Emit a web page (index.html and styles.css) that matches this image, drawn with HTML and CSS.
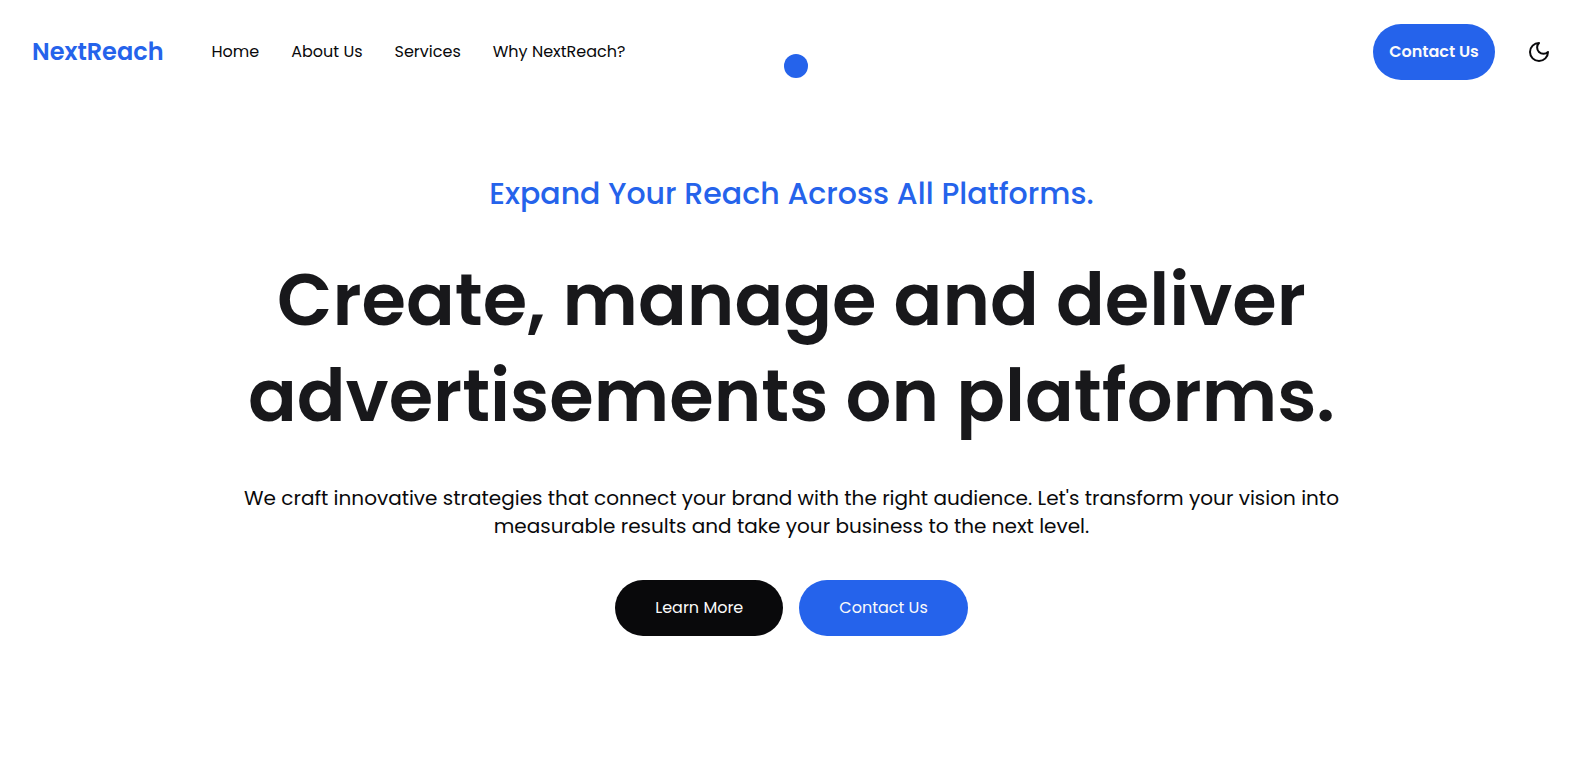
FILE: index.html
```html
<!DOCTYPE html>
<html lang="en">
<head>
<meta charset="utf-8">
<meta name="viewport" content="width=device-width, initial-scale=1">
<title>NextReach</title>
<link rel="stylesheet" href="styles.css">
</head>
<body>
<header class="header">
  <a class="brand" href="#">NextReach</a>
  <nav class="nav" aria-label="Main">
    <a href="#home">Home</a>
    <a href="#about">About Us</a>
    <a href="#services">Services</a>
    <a href="#why">Why NextReach?</a>
  </nav>
  <div class="actions">
    <button class="btn btn-nav" type="button">Contact Us</button>
    <button class="theme-toggle" type="button" aria-label="Toggle dark mode">
      <svg viewBox="0 0 24 24" width="24" height="24" fill="none" stroke="currentColor" stroke-width="2" stroke-linecap="round" stroke-linejoin="round" aria-hidden="true"><path d="M12 3a6 6 0 0 0 9 9 9 9 0 1 1-9-9Z"/></svg>
    </button>
  </div>
</header>
<main class="hero">
  <p class="eyebrow">Expand Your Reach Across All Platforms.</p>
  <h1 class="title">Create, manage and deliver <br>advertisements on platforms.</h1>
  <p class="lead">We craft innovative strategies that connect your brand with the right audience. Let's transform your vision into <br>measurable results and take your business to the next level.</p>
  <div class="cta">
    <button class="btn btn-dark" type="button">Learn More</button>
    <button class="btn" type="button">Contact Us</button>
  </div>
</main>
<span class="cursor-dot" aria-hidden="true"></span>
</body>
</html>
```
FILE: styles.css
```css
* { box-sizing: border-box; }

body {
  margin: 0;
  background: #fff;
  color: #09090b;
  font-family: Poppins, Inter, "Open Sans", sans-serif;
  font-size: 16px;
  line-height: 24px;
}

.header {
  display: flex;
  align-items: center;
  padding: 24px 27px 24px 32px;
}

.brand {
  color: #2563eb;
  font-size: 24px;
  font-weight: 600;
  line-height: 32px;
  text-decoration: none;
}

.nav {
  display: flex;
  gap: 32px;
  margin-left: 48px;
}

.nav a {
  color: inherit;
  text-decoration: none;
}

.actions {
  display: flex;
  align-items: center;
  gap: 32px;
  margin-left: auto;
}

.btn {
  min-width: 168px;
  height: 56px;
  padding: 0 40px;
  border: 0;
  border-radius: 28px;
  background: #2563eb;
  color: #fafafa;
  font: inherit;
  white-space: nowrap;
}

.btn-dark { background: #09090b; }

.btn-nav {
  min-width: 122px;
  padding: 0 16px;
  font-weight: 600;
}

.theme-toggle {
  display: flex;
  padding: 0;
  border: 0;
  background: none;
  color: inherit;
}

.hero {
  display: flex;
  flex-direction: column;
  align-items: center;
  padding: 72px 16px 64px 21px;
  text-align: center;
}

.eyebrow {
  margin: 0;
  color: #2563eb;
  font-size: 30px;
  font-weight: 500;
  line-height: 36px;
}

.title {
  margin: 40px 0 0;
  color: #18181b;
  font-size: 72px;
  font-weight: 600;
  line-height: 96px;
}

.lead {
  margin: 40px 0 0;
  font-size: 20px;
  line-height: 28px;
}

.cta {
  display: flex;
  gap: 16px;
  margin-top: 40px;
}

.cursor-dot {
  position: absolute;
  top: 54px;
  left: calc(50% - 5px);
  width: 24px;
  height: 24px;
  border-radius: 50%;
  background: #2563eb;
  pointer-events: none;
}
```
